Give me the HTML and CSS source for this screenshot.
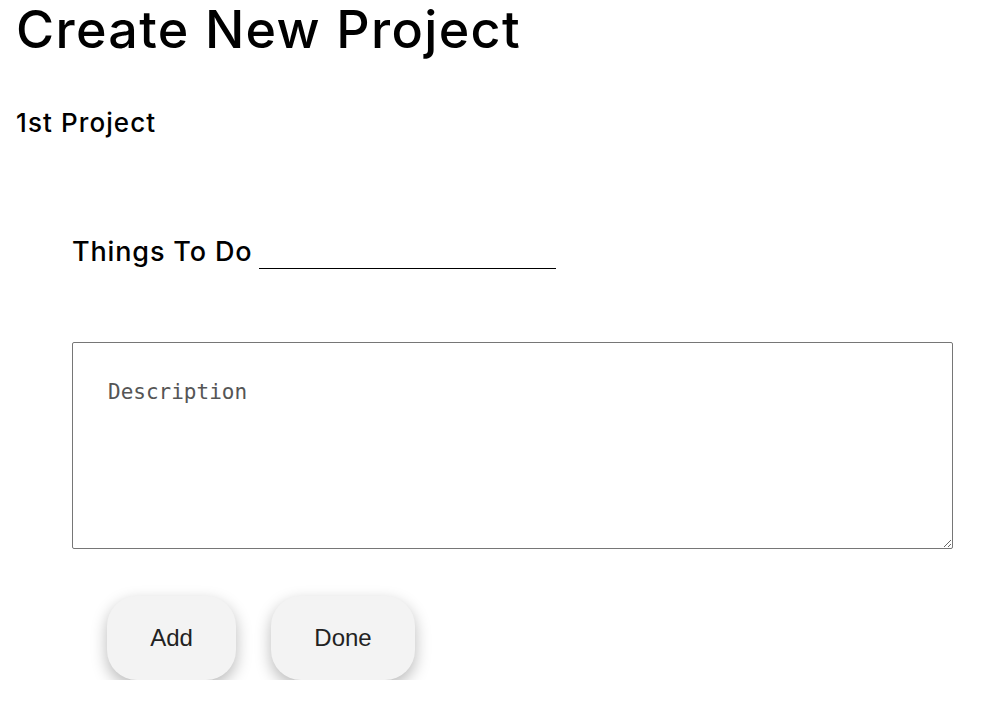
FILE: index.html
```html
<!DOCTYPE html>
<html>
<head>
<meta charset="utf-8">
<link rel="stylesheet" href="styles.css">
</head>
<body>
<div class="page">
  <h1 class="title">Create New Project</h1>
  <h2 class="project">1st Project</h2>
  <form class="todo">
    <div class="field">
      <label class="label" for="thing">Things To Do</label>
      <input class="line-input" id="thing" type="text">
    </div>
    <textarea class="desc" placeholder="Description"></textarea>
    <div class="actions">
      <button type="button" class="btn btn-add">Add</button>
      <button type="button" class="btn btn-done">Done</button>
    </div>
  </form>
</div>
</body>
</html>
```
FILE: styles.css
```css
* { box-sizing: border-box; }
html, body { margin: 0; padding: 0; background: #fff; }
body { font-family: Inter, "Open Sans", sans-serif; color: #000; }
.page { padding: 0 16px; }
.title {
  margin: 0;
  font-size: 52px;
  font-weight: 500;
  line-height: 60px;
  letter-spacing: 1.35px;
}
.project {
  margin: 46px 0 0;
  font-size: 26px;
  font-weight: 500;
  line-height: 34px;
  letter-spacing: 1.1px;
}
.todo { padding: 90px 19px 0 56px; }
.field { display: flex; align-items: flex-end; gap: 7px; height: 40px; }
.label { font-size: 27px; font-weight: 500; line-height: 36px; letter-spacing: 0.85px; }
.line-input {
  width: 297px;
  height: 24px;
  border: none;
  border-bottom: 1.5px solid #000;
  outline: none;
  background: transparent;
  margin-bottom: 1px;
}
.desc {
  display: block;
  width: 881px;
  height: 207px;
  margin-top: 72px;
  border: 1px solid #767676;
  border-radius: 2px;
  padding: 37px 35px;
  font-family: "DejaVu Sans Mono", "Liberation Mono", monospace;
  font-size: 21px;
  resize: both;
}
.desc::placeholder { color: #555; }
.actions { display: flex; gap: 35px; padding: 47px 0 0 35px; }
.btn {
  height: 84px;
  border: none;
  border-radius: 30px;
  background: #f3f3f3;
  box-shadow: 0 6px 16px rgba(0,0,0,0.28);
  font-family: "Liberation Sans", Arial, sans-serif;
  font-size: 24px;
  color: #222;
}
.btn-add { width: 129px; }
.btn-done { width: 144px; }
```
